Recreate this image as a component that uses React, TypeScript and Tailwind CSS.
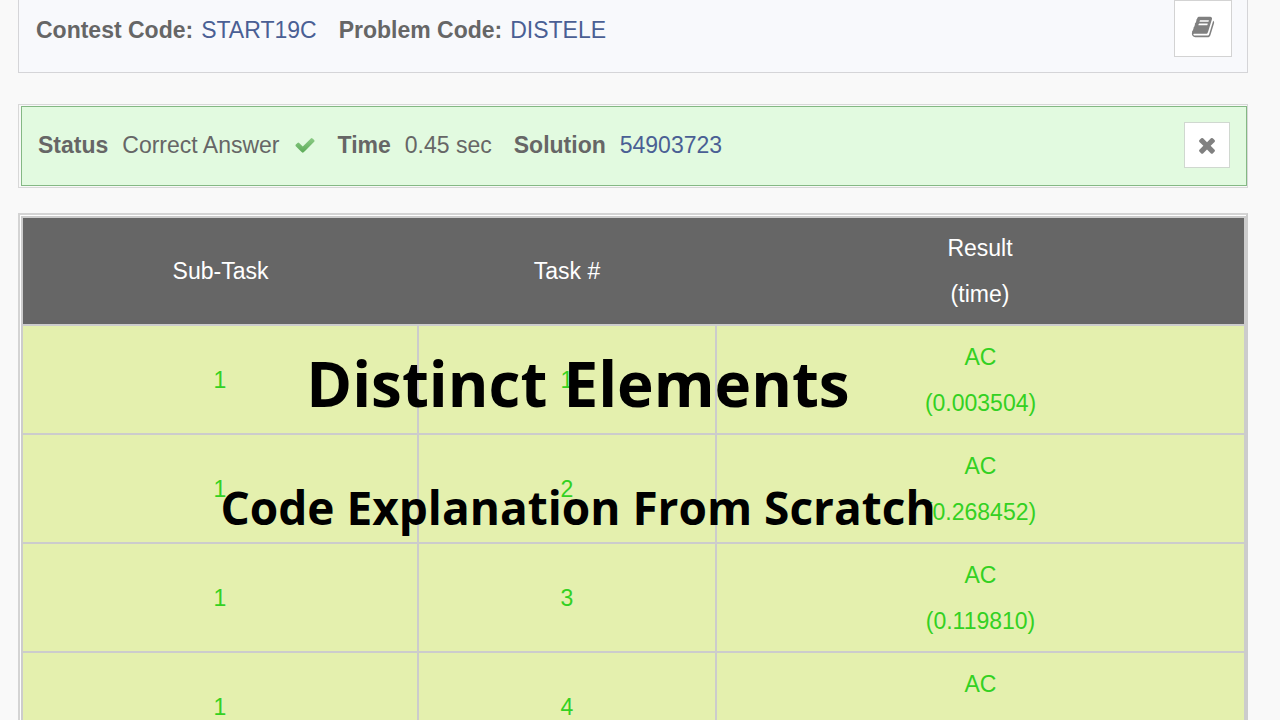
import type { ReactNode } from "react";

const results = [
  { subTask: 1, task: 1, verdict: "AC", time: "(0.003504)" },
  { subTask: 1, task: 2, verdict: "AC", time: "(0.268452)" },
  { subTask: 1, task: 3, verdict: "AC", time: "(0.119810)" },
  { subTask: 1, task: 4, verdict: "AC", time: "\u00a0" },
];

function BookIcon() {
  return (
    <svg viewBox="-64 0 1792 1792" className="size-6 fill-[#808080]" aria-hidden="true">
      <path d="M1639 478q40 57 18 129l-275 906q-19 64-76.500 107.500t-122.500 43.500h-923q-77 0-148.500-53.500t-99.500-131.500q-24-67-2-127 0-4 3-27t4-37q1-8-3-21.500t-3-19.500q2-11 8-21t16.500-23.500 16.500-23.500q23-38 45-91.500t30-91.500q3-10 .5-30t-.5-28q3-11 17-28t17-23q21-36 42-92t25-90q1-9-2.500-32t.5-28q4-13 22-30.500t22-22.500q19-26 42.500-84.500t27.500-96.500q1-8-3-25.500t-2-26.500q2-8 9-18t18-23 17-21q8-12 16.500-30.500t15-35 16-36 19.500-32 26.500-23.500 36-11.500 47.500 5.500l-1 3q38-9 51-9h761q74 0 114 56t18 130l-274 906q-36 119-71.500 153.500t-128.500 34.500h-869q-27 0-38 15-11 16-1 43 24 70 144 70h923q29 0 56-15.500t35-41.500l300-987q7-22 5-57 38 15 59 43zm-1064 2q-4 13 2 22.500t20 9.500h608q13 0 25.500-9.500t16.500-22.500l21-64q4-13-2-22.500t-20-9.500h-608q-13 0-25.500 9.500t-16.500 22.500zm-83 256q-4 13 2 22.500t20 9.500h608q13 0 25.500-9.500t16.500-22.500l21-64q4-13-2-22.500t-20-9.500h-608q-13 0-25.500 9.500t-16.500 22.500z" />
    </svg>
  );
}

function CheckIcon() {
  return (
    <svg viewBox="0 0 1792 1792" className="size-[22px]" aria-hidden="true">
      <defs>
        <linearGradient id="check-fill" x1="0" y1="0" x2="0" y2="1">
          <stop offset="0" stopColor="#8ccb86" />
          <stop offset="1" stopColor="#5cab58" />
        </linearGradient>
      </defs>
      <path
        fill="url(#check-fill)"
        d="M1671 566q0 40-28 68l-724 724-136 136q-28 28-68 28t-68-28l-136-136-362-362q-28-28-28-68t28-68l136-136q28-28 68-28t68 28l294 295 656-657q28-28 68-28t68 28l136 136q28 28 28 68z"
      />
    </svg>
  );
}

function CloseIcon() {
  return (
    <svg viewBox="0 0 1792 1792" className="size-6 fill-[#808080]" aria-hidden="true">
      <path d="M1490 1322q0 40-28 68l-136 136q-28 28-68 28t-68-28l-294-294-294 294q-28 28-68 28t-68-28l-136-136q-28-28-28-68t28-68l294-294-294-294q-28-28-28-68t28-68l136-136q28-28 68-28t68 28l294 294 294-294q28-28 68-28t68 28l136 136q28 28 28 68t-28 68l-294 294 294 294q28 28 28 68z" />
    </svg>
  );
}

function Field({ label, children }: { label: string; children: ReactNode }) {
  return (
    <div className="flex items-center gap-[14px]">
      <strong>{label}</strong>
      {children}
    </div>
  );
}

function App() {
  return (
    <div className="relative h-screen overflow-hidden bg-[#f9f9f9] pl-[18px] pr-8 font-['Liberation_Sans',Arial,sans-serif] text-[23px] leading-[46px] text-[#666]">
      {/* Contest header */}
      <header className="flex items-start justify-between border border-t-0 border-[#d5d5d8] bg-[#f8f9fc] pb-[15px] pl-[17px] pr-[15px]">
        <div className="flex gap-[22px] pt-[7px]">
          <div className="flex gap-2">
            <strong>Contest Code:</strong>
            <a href="#contest" className="text-[#4a5f94]">START19C</a>
          </div>
          <div className="flex gap-2">
            <strong>Problem Code:</strong>
            <a href="#problem" className="text-[#4a5f94]">DISTELE</a>
          </div>
        </div>
        <button
          aria-label="Problem statement"
          className="flex h-[57px] w-[58px] items-center justify-center border border-[#d3d3d3] bg-white pb-1"
        >
          <BookIcon />
        </button>
      </header>

      {/* Verdict */}
      <section className="mt-[31px] border border-[#d8d8d8] py-px pl-[2px]">
        <div className="flex items-center justify-between border border-[#84b884] bg-[#e2fae0] pb-[17px] pl-4 pr-4 pt-[15px]">
          <div className="flex gap-[22px]">
            <Field label="Status">
              <span>Correct Answer</span>
              <CheckIcon />
            </Field>
            <Field label="Time">
              <span>0.45 sec</span>
            </Field>
            <Field label="Solution">
              <a href="#solution" className="text-[#4a5f94]">54903723</a>
            </Field>
          </div>
          <button
            aria-label="Close"
            className="flex size-[46px] items-center justify-center border border-[#d0d8d0] bg-white"
          >
            <CloseIcon />
          </button>
        </div>
      </section>

      {/* Task results */}
      <section className="mt-[25px] border-2 border-[#d4d4d4] border-r-[#ccc] bg-white pl-px pt-px">
        <table className="w-full table-fixed border-collapse text-center">
          <colgroup>
            <col className="w-[396px]" />
            <col className="w-[298px]" />
            <col />
          </colgroup>
          <thead className="bg-[#666] text-white">
            <tr className="border-2 border-[#ccc]">
              <th className="font-normal">Sub-Task</th>
              <th className="font-normal">Task #</th>
              <th className="py-[7px] font-normal">
                Result
                <br />
                (time)
              </th>
            </tr>
          </thead>
          <tbody className="bg-[#e4f0ae] text-[#33d122]">
            {results.map((row) => (
              <tr key={row.task}>
                <td className="border-2 border-[#ccc]">{row.subTask}</td>
                <td className="border-2 border-[#ccc]">{row.task}</td>
                <td className="border-2 border-[#ccc] pb-[7px] pt-2">
                  {row.verdict}
                  <br />
                  {row.time}
                </td>
              </tr>
            ))}
          </tbody>
        </table>
      </section>

      {/* Title laid over the results */}
      <div className="pointer-events-none absolute inset-x-0 top-[340px] pr-[124px] text-center font-['Open_Sans','Noto_Sans',sans-serif] font-bold text-black">
        <h1 className="text-[62px] leading-[86px]">Distinct Elements</h1>
        <h2 className="mt-12 text-[46px] leading-[66px]">Code Explanation From Scratch</h2>
      </div>
    </div>
  );
}

export default App;
